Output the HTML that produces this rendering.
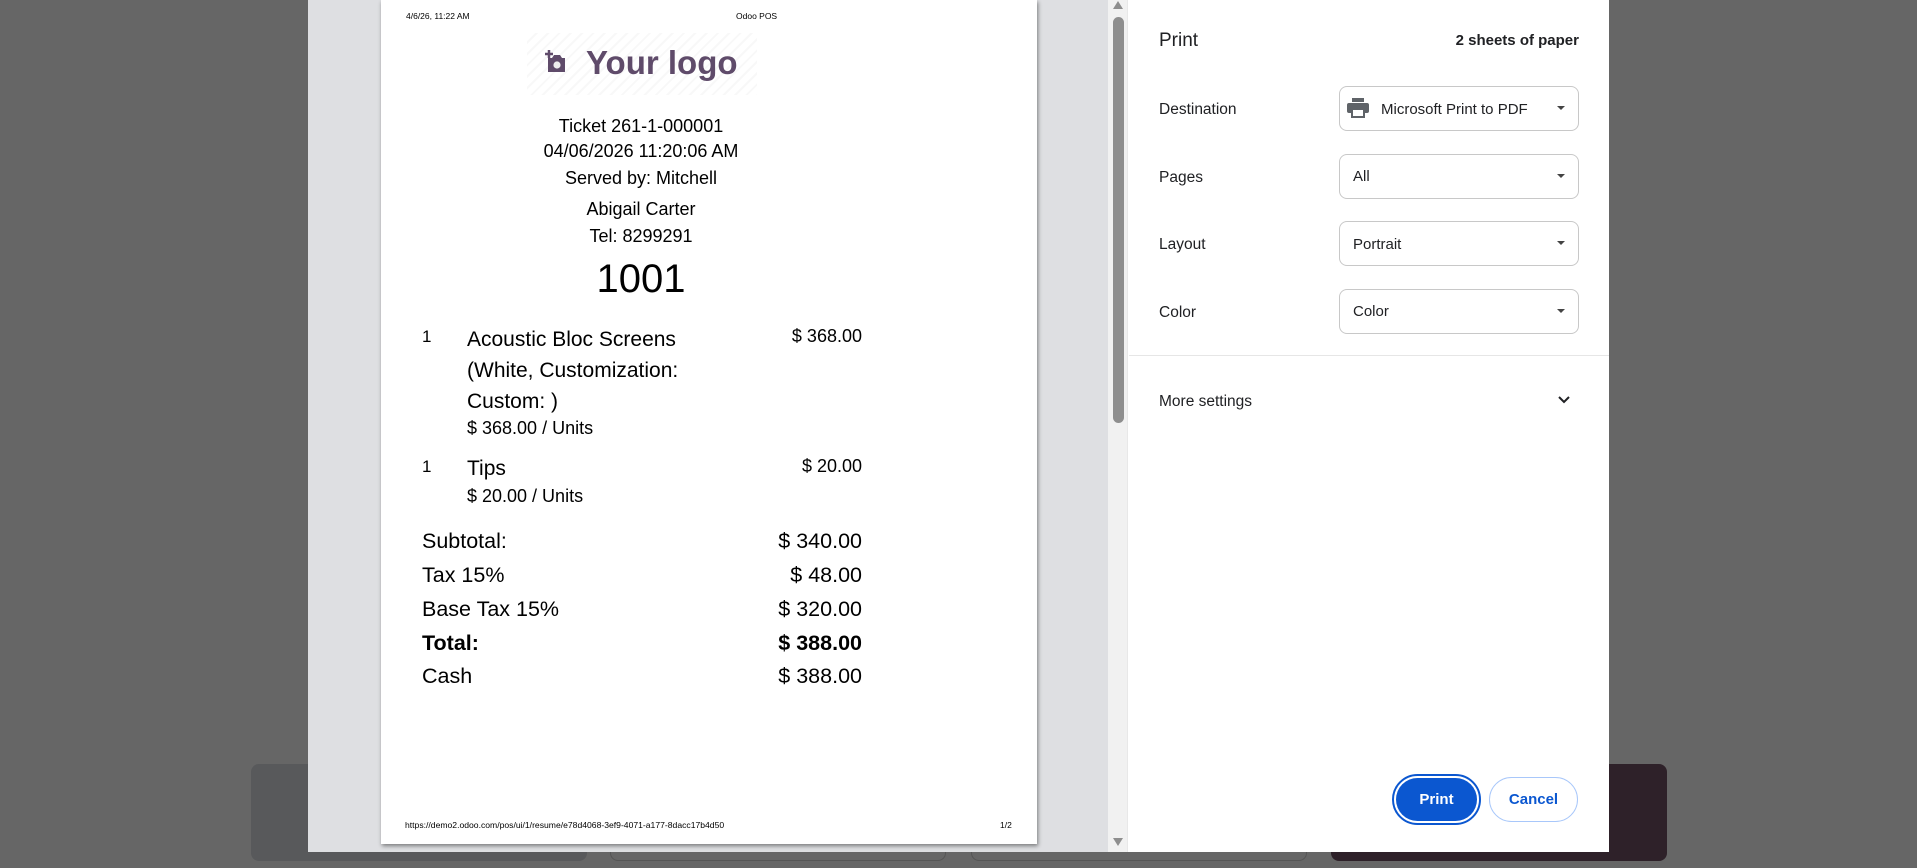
<!DOCTYPE html>
<html><head><meta charset="utf-8"><style>
*{margin:0;padding:0;box-sizing:border-box}
body{width:1917px;height:868px;background:#666;position:relative;overflow:hidden;font-family:"Liberation Sans",Arial,sans-serif;color:#000}
.a{position:absolute;white-space:nowrap;line-height:1}
.r{text-align:right}
.c{text-align:center}
</style></head><body>
<div class="a" style="left:251px;top:764px;width:336px;height:97px;background:#58595b;border-radius:8px"></div>
<div class="a" style="left:610px;top:764px;width:336px;height:97px;border:1px solid #555;border-radius:8px"></div>
<div class="a" style="left:971px;top:764px;width:336px;height:97px;border:1px solid #555;border-radius:8px"></div>
<div class="a" style="left:1331px;top:764px;width:336px;height:97px;background:#2e2129;border-radius:8px"></div>

<div class="a" style="left:308px;top:0;width:1301px;height:852px;background:#fff"></div>
<div class="a" style="left:308px;top:0;width:800px;height:852px;background:#dedfe2"></div>
<div class="a" style="left:1108px;top:0;width:20px;height:852px;background:#f1f1f1;border-right:1px solid #e8e8e8"></div>
<div class="a" style="left:1113px;top:17px;width:11px;height:406px;background:#8e8e8e;border-radius:6px"></div>
<div class="a" style="left:1113px;top:1px;width:0;height:0;border-left:5px solid transparent;border-right:5px solid transparent;border-bottom:8px solid #8e8e8e"></div>
<div class="a" style="left:1113px;top:838px;width:0;height:0;border-left:5px solid transparent;border-right:5px solid transparent;border-top:8px solid #8e8e8e"></div>

<div class="a" style="left:381px;top:0;width:656px;height:844px;background:#fff;box-shadow:1px 2px 4px rgba(0,0,0,.45)"></div>
<div class="a" style="left:406px;top:12px;font-size:8.5px">4/6/26, 11:22 AM</div>
<div class="a" style="left:736px;top:12px;font-size:8.5px">Odoo POS</div>
<div class="a" style="left:527px;top:33px;width:230px;height:62px;background:repeating-linear-gradient(135deg,#fff 0 6px,#f8f8f8 6px 8px)"></div>
<svg class="a" style="left:544px;top:48px" width="24" height="28" viewBox="0 0 24 28"><path d="M5 2v8M1 6h8" stroke="#5f4b6a" stroke-width="2.5"/><path d="M4 10h4l2-3h6l2 3h3v14H4z" fill="#5f4b6a"/><circle cx="13" cy="17" r="3.6" fill="#eee"/></svg>
<div class="a" style="left:586px;top:46px;font-size:33px;font-weight:bold;color:#5f4b6a">Your logo</div>
<div class="a c" style="left:381px;width:520px;top:117px;font-size:18px">Ticket 261-1-000001</div>
<div class="a c" style="left:381px;width:520px;top:142px;font-size:18px">04/06/2026 11:20:06 AM</div>
<div class="a c" style="left:381px;width:520px;top:169px;font-size:18px">Served by: Mitchell</div>
<div class="a c" style="left:381px;width:520px;top:200px;font-size:18px">Abigail Carter</div>
<div class="a c" style="left:381px;width:520px;top:227px;font-size:18px">Tel: 8299291</div>
<div class="a c" style="left:381px;width:520px;top:259px;font-size:40px">1001</div>

<div class="a" style="left:422px;top:328px;font-size:17px">1</div>
<div class="a" style="left:467px;top:329px;font-size:21px">Acoustic Bloc Screens</div>
<div class="a" style="left:467px;top:360px;font-size:21px">(White, Customization:</div>
<div class="a" style="left:467px;top:391px;font-size:21px">Custom: )</div>
<div class="a" style="left:467px;top:419px;font-size:18px">$ 368.00 / Units</div>
<div class="a r" style="left:700px;width:162px;top:327px;font-size:18px">$ 368.00</div>
<div class="a" style="left:422px;top:458px;font-size:17px">1</div>
<div class="a" style="left:467px;top:458px;font-size:21px">Tips</div>
<div class="a" style="left:467px;top:487px;font-size:18px">$ 20.00 / Units</div>
<div class="a r" style="left:700px;width:162px;top:457px;font-size:18px">$ 20.00</div>

<div class="a" style="left:422px;top:531px;font-size:21.5px">Subtotal:</div>
<div class="a r" style="left:650px;width:212px;top:531px;font-size:21.5px">$ 340.00</div>
<div class="a" style="left:422px;top:565px;font-size:21.5px">Tax 15%</div>
<div class="a r" style="left:650px;width:212px;top:565px;font-size:21.5px">$ 48.00</div>
<div class="a" style="left:422px;top:599px;font-size:21.5px">Base Tax 15%</div>
<div class="a r" style="left:650px;width:212px;top:599px;font-size:21.5px">$ 320.00</div>
<div class="a" style="left:422px;top:633px;font-size:21.5px;font-weight:bold">Total:</div>
<div class="a r" style="left:650px;width:212px;top:633px;font-size:21.5px;font-weight:bold">$ 388.00</div>
<div class="a" style="left:422px;top:666px;font-size:21.5px">Cash</div>
<div class="a r" style="left:650px;width:212px;top:666px;font-size:21.5px">$ 388.00</div>

<div class="a" style="left:405px;top:821px;font-size:8.6px">https://demo2.odoo.com/pos/ui/1/resume/e78d4068-3ef9-4071-a177-8dacc17b4d50</div>
<div class="a" style="left:1000px;top:821px;font-size:8.5px">1/2</div>

<div class="a" style="left:1159px;top:31px;font-size:19px;color:#202124">Print</div>
<div class="a r" style="left:1390px;width:189px;top:33px;font-size:15px;font-weight:bold;color:#202124">2 sheets of paper</div>

<div class="a" style="left:1159px;top:102px;font-size:15.5px;color:#202124">Destination</div>
<div class="a" style="left:1339px;top:86px;width:240px;height:45px;border:1px solid #c8c8c8;border-radius:8px"></div>
<svg class="a" style="left:1347px;top:98px" width="22" height="20" viewBox="0 0 22 20"><rect x="5" y="0" width="12" height="4" fill="#5f6368"/><rect x="0" y="5" width="22" height="10" rx="2" fill="#5f6368"/><rect x="5" y="11" width="12" height="8" fill="#fff" stroke="#5f6368" stroke-width="2"/></svg>
<div class="a" style="left:1381px;top:102px;font-size:15px;color:#202124">Microsoft Print to PDF</div>

<div class="a" style="left:1159px;top:170px;font-size:15.5px;color:#202124">Pages</div>
<div class="a" style="left:1339px;top:154px;width:240px;height:45px;border:1px solid #c8c8c8;border-radius:8px"></div>
<div class="a" style="left:1353px;top:169px;font-size:15px;color:#202124">All</div>

<div class="a" style="left:1159px;top:237px;font-size:15.5px;color:#202124">Layout</div>
<div class="a" style="left:1339px;top:221px;width:240px;height:45px;border:1px solid #c8c8c8;border-radius:8px"></div>
<div class="a" style="left:1353px;top:237px;font-size:15px;color:#202124">Portrait</div>

<div class="a" style="left:1159px;top:305px;font-size:15.5px;color:#202124">Color</div>
<div class="a" style="left:1339px;top:289px;width:240px;height:45px;border:1px solid #c8c8c8;border-radius:8px"></div>
<div class="a" style="left:1353px;top:304px;font-size:15px;color:#202124">Color</div>

<div class="a" style="left:1557px;top:106px;border-left:4.5px solid transparent;border-right:4.5px solid transparent;border-top:4.5px solid #444"></div>
<div class="a" style="left:1557px;top:174px;border-left:4.5px solid transparent;border-right:4.5px solid transparent;border-top:4.5px solid #444"></div>
<div class="a" style="left:1557px;top:241px;border-left:4.5px solid transparent;border-right:4.5px solid transparent;border-top:4.5px solid #444"></div>
<div class="a" style="left:1557px;top:309px;border-left:4.5px solid transparent;border-right:4.5px solid transparent;border-top:4.5px solid #444"></div>

<div class="a" style="left:1129px;top:355px;width:480px;height:1px;background:#e6e6e6"></div>
<div class="a" style="left:1159px;top:394px;font-size:15.5px;color:#202124">More settings</div>
<svg class="a" style="left:1557px;top:395px" width="14" height="10" viewBox="0 0 14 10"><path d="M2 2l5 5 5-5" fill="none" stroke="#202124" stroke-width="2"/></svg>

<div class="a" style="left:1392px;top:774px;width:89px;height:51px;border:2px solid #0b57d0;border-radius:26px;background:#fff"></div>
<div class="a" style="left:1396px;top:778px;width:81px;height:43px;border-radius:22px;background:#0b57d0"></div>
<div class="a c" style="left:1392px;width:89px;top:792px;font-size:15px;font-weight:bold;color:#fff">Print</div>
<div class="a" style="left:1489px;top:777px;width:89px;height:45px;border:1px solid #a8c7fa;border-radius:23px"></div>
<div class="a c" style="left:1489px;width:89px;top:792px;font-size:15px;font-weight:bold;color:#0b57d0">Cancel</div>
</body></html>
